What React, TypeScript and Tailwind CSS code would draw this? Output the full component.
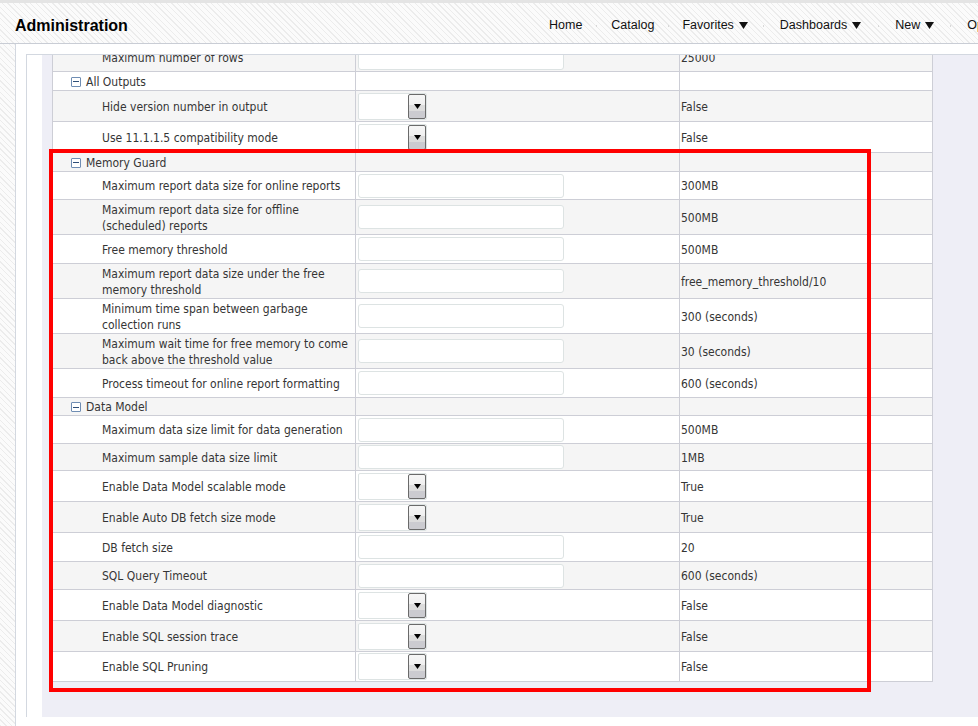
import React from 'react';

type Row = {
    type: 'group' | 'input' | 'select';
    label: string[];
    value?: string;
    h: string;
};

const rows: Row[] = [
    { type: 'input', label: ['Maximum number of rows'], value: '25000', h: 'h-[28px]' },
    { type: 'group', label: ['All Outputs'], h: 'h-[19px]' },
    { type: 'select', label: ['Hide version number in output'], value: 'False', h: 'h-[31px]' },
    { type: 'select', label: ['Use 11.1.1.5 compatibility mode'], value: 'False', h: 'h-[31px]' },
    { type: 'group', label: ['Memory Guard'], h: 'h-[19px]' },
    { type: 'input', label: ['Maximum report data size for online reports'], value: '300MB', h: 'h-[28px]' },
    { type: 'input', label: ['Maximum report data size for offline', '(scheduled) reports'], value: '500MB', h: 'h-[35px]' },
    { type: 'input', label: ['Free memory threshold'], value: '500MB', h: 'h-[29px]' },
    { type: 'input', label: ['Maximum report data size under the free', 'memory threshold'], value: 'free_memory_threshold/10', h: 'h-[35px]' },
    { type: 'input', label: ['Minimum time span between garbage', 'collection runs'], value: '300 (seconds)', h: 'h-[35px]' },
    { type: 'input', label: ['Maximum wait time for free memory to come', 'back above the threshold value'], value: '30 (seconds)', h: 'h-[35px]' },
    { type: 'input', label: ['Process timeout for online report formatting'], value: '600 (seconds)', h: 'h-[29px]' },
    { type: 'group', label: ['Data Model'], h: 'h-[18px]' },
    { type: 'input', label: ['Maximum data size limit for data generation'], value: '500MB', h: 'h-[28px]' },
    { type: 'input', label: ['Maximum sample data size limit'], value: '1MB', h: 'h-[27px]' },
    { type: 'select', label: ['Enable Data Model scalable mode'], value: 'True', h: 'h-[31px]' },
    { type: 'select', label: ['Enable Auto DB fetch size mode'], value: 'True', h: 'h-[31px]' },
    { type: 'input', label: ['DB fetch size'], value: '20', h: 'h-[29px]' },
    { type: 'input', label: ['SQL Query Timeout'], value: '600 (seconds)', h: 'h-[28px]' },
    { type: 'select', label: ['Enable Data Model diagnostic'], value: 'False', h: 'h-[31px]' },
    { type: 'select', label: ['Enable SQL session trace'], value: 'False', h: 'h-[31px]' },
    { type: 'select', label: ['Enable SQL Pruning'], value: 'False', h: 'h-[30px]' },
];

// gap = space before the item, so the items land where the reference has them
const navItems = [
    { label: 'Home', menu: false, gap: '' },
    { label: 'Catalog', menu: false, gap: 'w-[29px]' },
    { label: 'Favorites', menu: true, gap: 'w-[28px]' },
    { label: 'Dashboards', menu: true, gap: 'w-[32px]' },
    { label: 'New', menu: true, gap: 'w-[34px]' },
    { label: 'Open', menu: true, gap: 'w-[33px]' },
];

const Caret = () => (
    <svg width="9" height="7" viewBox="0 0 9 7" className="ml-[5px]">
        <path d="M0 0h9L4.5 7z" fill="#111" />
    </svg>
);

const SelectBox = () => (
    <div className="flex h-[27px] w-[69px] rounded-[2px] border border-[#dde3e3] bg-white">
        <div className="flex-1" />
        <div className="flex h-full w-[18px] justify-center rounded-[2px] border border-[#6a6a6a] bg-[linear-gradient(#f6f6f6_0%,#efefef_45%,#dcdcdc_45%,#dcdcdc_68%,#cbcbd0_68%)] pt-[9px]">
            <svg width="7" height="5" viewBox="0 0 7 5">
                <path d="M0 0h7L3.5 5z" fill="#000" />
            </svg>
        </div>
    </div>
);

const GroupIcon = () => (
    <div className="mr-[5px] flex h-[10px] w-[10px] items-center justify-center rounded-[1px] border border-[#6f8db3] bg-white">
        <div className="h-px w-[6px] bg-[#2f4f78]" />
    </div>
);

const App: React.FC = () => {
    return (
        <div className="relative h-[726px] w-[978px] overflow-hidden bg-[repeating-linear-gradient(45deg,#ececec_0px,#ececec_1px,#fbfbfb_1px,#fbfbfb_4px)] font-['Liberation_Sans',Arial,sans-serif]">
            <div className="h-[3px] bg-[#e4e4e4]" />
            {/* header */}
            <div className="flex h-[41px] items-center whitespace-nowrap border-b border-[#c9cdd5] pt-[5px]">
                <div className="w-[549px] shrink-0 pl-[15px] text-[16px] font-bold text-black">Administration</div>
                {navItems.map((item) => (
                    <div key={item.label} className="flex shrink-0 items-center">
                        {item.gap && (
                            <div className={`flex shrink-0 justify-center ${item.gap}`}>
                                <div className="h-[2px] w-px bg-[#d8d8d8]" />
                            </div>
                        )}
                        <div className="flex shrink-0 items-center text-[12.5px] text-[#111]">
                            {item.label}
                            {item.menu && <Caret />}
                        </div>
                    </div>
                ))}
            </div>

            {/* body */}
            <div className="ml-[15px] flex h-[682px] flex-col border-l border-[#d3d8e0] bg-white pl-[10px] pt-[10px]">
                <div className="flex flex-1 flex-col border-l border-t border-[#d3d8e0]">
                    <div className="flex h-[662px] pl-[15px]">
                        <div className="flex-1 overflow-hidden bg-[#eeeef6] pl-[10px]">
                            <div className="-mt-[11px] w-[881px] border-l border-r border-[#cdced6] font-['DejaVu_Sans_Condensed',Tahoma,sans-serif] text-[12px] text-[#353535]">
                                {rows.map((row, i) => (
                                    <div
                                        key={i}
                                        className={`flex border-b border-[#cdced6] ${row.h} ${i % 2 === 0 ? 'bg-[#f5f5f5]' : 'bg-white'}`}
                                    >
                                        {row.type === 'group' ? (
                                            <div className="flex w-[303px] items-center border-r border-[#cdced6] pl-[18px] pt-px">
                                                <GroupIcon />
                                                <span>{row.label[0]}</span>
                                            </div>
                                        ) : (
                                            <div className="flex w-[303px] flex-col justify-center border-r border-[#cdced6] pl-[49px] pt-px leading-[16px]">
                                                {row.label.map((l) => (
                                                    <span key={l}>{l}</span>
                                                ))}
                                            </div>
                                        )}
                                        <div className="flex w-[324px] items-center border-r border-[#cdced6] pl-[2px]">
                                            {row.type === 'input' && (
                                                <div className="h-[24px] w-[206px] rounded-[3px] border border-[#dde3e3] bg-white" />
                                            )}
                                            {row.type === 'select' && <SelectBox />}
                                        </div>
                                        <div className="flex flex-1 items-center pl-[1px] pt-px">{row.value}</div>
                                    </div>
                                ))}
                            </div>
                        </div>
                    </div>
                </div>
                <div className="h-[9px]" />
            </div>

            {/* highlight annotation */}
            <div className="pointer-events-none absolute left-[49px] top-[149px] h-[543px] w-[822px] border-4 border-[#ff0000]" />
        </div>
    );
};

export default App;
